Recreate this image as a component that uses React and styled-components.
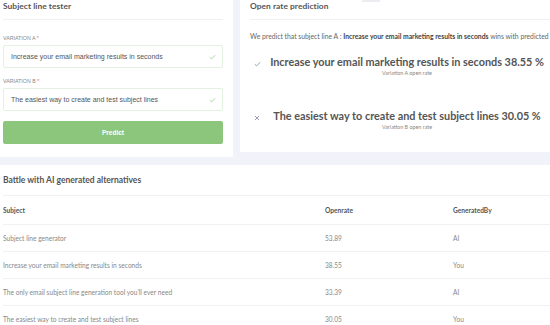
import React from 'react'
import styled, { createGlobalStyle } from 'styled-components'

const Global = createGlobalStyle`
  body {
    margin: 0;
    background: #f2f2fa;
    font-family: Lato, "Open Sans", sans-serif;
    overflow: hidden;
  }
`

const rows = [
  { subject: 'Subject line generator', rate: '53.89', by: 'AI' },
  { subject: 'Increase your email marketing results in seconds', rate: '38.55', by: 'You' },
  { subject: "The only email subject line generation tool you'll ever need", rate: '33.39', by: 'AI' },
  { subject: 'The easiest way to create and test subject lines', rate: '30.05', by: 'You' },
]

const CheckIcon = ({ color }) => (
  <svg width="7" height="6" viewBox="0 0 7 6" fill="none">
    <path d="M0.8 3.2 L2.6 4.9 L6.2 1.2" stroke={color} strokeWidth="0.9" />
  </svg>
)

const CrossIcon = ({ color }) => (
  <svg width="6" height="6" viewBox="0 0 6 6" fill="none">
    <path d="M1 1 L5 5 M5 1 L1 5" stroke={color} strokeWidth="0.9" />
  </svg>
)

const App = () => {
  return (
    <Page>
      <Global />
      <TopRow>
        <Card>
          <CardHeader>Subject line tester</CardHeader>
          <Label>Variation A <Star>*</Star></Label>
          <Input>
            <span>Increase your email marketing results in seconds</span>
            <CheckIcon color="#9ed29a" />
          </Input>
          <Label gap={9}>Variation B <Star>*</Star></Label>
          <Input>
            <span>The easiest way to create and test subject lines</span>
            <CheckIcon color="#9ed29a" />
          </Input>
          <Button>Predict</Button>
        </Card>
        <ResultCard>
          <CardHeader>Open rate prediction</CardHeader>
          <Summary>
            We predict that subject line A : <b>Increase your email marketing results in seconds</b> wins with predicted open rate of 38.55 %
          </Summary>
          <Result top={14}>
            <IconCell><CheckIcon color="#8e93ab" /></IconCell>
            <ResultText>
              <Big>Increase your email marketing results in seconds 38.55 %</Big>
              <Small>Variation A open rate</Small>
            </ResultText>
          </Result>
          <Result top={32}>
            <IconCell><CrossIcon color="#8e93ab" /></IconCell>
            <ResultText>
              <Big>The easiest way to create and test subject lines 30.05 %</Big>
              <Small>Variation B open rate</Small>
            </ResultText>
          </Result>
        </ResultCard>
      </TopRow>
      <TableCard>
        <TableTitle>Battle with AI generated alternatives</TableTitle>
        <TableRow head>
          <span>Subject</span>
          <span>Openrate</span>
          <span>GeneratedBy</span>
        </TableRow>
        {rows.map((r) => (
          <TableRow key={r.subject}>
            <span>{r.subject}</span>
            <span>{r.rate}</span>
            <span>{r.by}</span>
          </TableRow>
        ))}
      </TableCard>
    </Page>
  )
}

const Page = styled.div`
  width: 550px;
  height: 325px;
  display: flex;
  flex-direction: column;
  gap: 8px;
  overflow: hidden;
`

const TopRow = styled.div`
  display: grid;
  grid-template-columns: 233px 1fr;
  gap: 7px;
  align-items: start;
`

const Card = styled.section`
  background: #fff;
  padding: 0 10px 13px 3px;
  display: flex;
  flex-direction: column;
`

const ResultCard = styled(Card)`
  position: relative;
  height: 152px;
  box-sizing: border-box;
  padding: 0 0 0 10px;
  overflow: hidden;
  &::before {
    content: '';
    position: absolute;
    top: 0;
    left: 122px;
    width: 18px;
    height: 2px;
    background: #ececf2;
  }
`

const CardHeader = styled.h3`
  margin: 0;
  height: 19px;
  line-height: 12px;
  font-size: 8.4px;
  font-weight: 700;
  color: #555;
  border-bottom: 1px solid #f1f1f4;
  letter-spacing: 0.05px;
`

const Label = styled.div`
  margin-top: ${(p) => p.gap || 14}px;
  font-family: "Liberation Sans", Arial, sans-serif;
  font-size: 5.3px;
  line-height: 8px;
  text-transform: uppercase;
  color: #888;
`

const Star = styled.span`
  color: #e06666;
`

const Input = styled.div`
  margin-top: 3px;
  height: 23px;
  box-sizing: border-box;
  border: 1px solid #e3f1e1;
  border-radius: 2px;
  display: flex;
  align-items: center;
  justify-content: space-between;
  padding: 0 6px 0 7px;
  font-family: "Liberation Sans", Arial, sans-serif;
  font-size: 7px;
  color: #555;
`

const Button = styled.button`
  margin-top: 10px;
  height: 23px;
  border: none;
  border-radius: 2px;
  background: #8cc67d;
  color: #fff;
  font-family: "Liberation Sans", Arial, sans-serif;
  font-size: 6.5px;
  font-weight: 700;
  padding: 0;
`

const Summary = styled.p`
  margin: 12px 0 0;
  white-space: nowrap;
  font-size: 6.8px;
  line-height: 9px;
  color: #666;
  b {
    color: #444;
  }
`

const Result = styled.div`
  margin-top: ${(p) => p.top}px;
  display: flex;
  align-items: flex-start;
`

const IconCell = styled.div`
  width: 14px;
  padding: 6px 0 0 4px;
  box-sizing: border-box;
  display: flex;
`

const ResultText = styled.div`
  flex: 1;
  text-align: center;
  white-space: nowrap;
`

const Big = styled.div`
  font-size: 10.85px;
  line-height: 14px;
  font-weight: 700;
  color: #555;
`

const Small = styled.div`
  margin-top: 1px;
  font-size: 5.4px;
  line-height: 7px;
  color: #888;
`

const TableCard = styled.section`
  background: #fff;
  padding: 0 0 0 3px;
  flex: 1;
`

const TableTitle = styled.h3`
  margin: 0;
  padding: 9px 0 9px;
  line-height: 12px;
  font-size: 8.5px;
  font-weight: 700;
  color: #555;
  border-bottom: 1px solid #f1f1f4;
`

const TableRow = styled.div`
  display: grid;
  grid-template-columns: 322px 128px 1fr;
  align-items: center;
  height: ${(p) => (p.head ? 28 : 26)}px;
  border-bottom: 1px solid #f1f1f4;
  font-size: 6.6px;
  font-weight: ${(p) => (p.head ? 700 : 400)};
  color: ${(p) => (p.head ? '#555' : '#888')};
`

export default App
